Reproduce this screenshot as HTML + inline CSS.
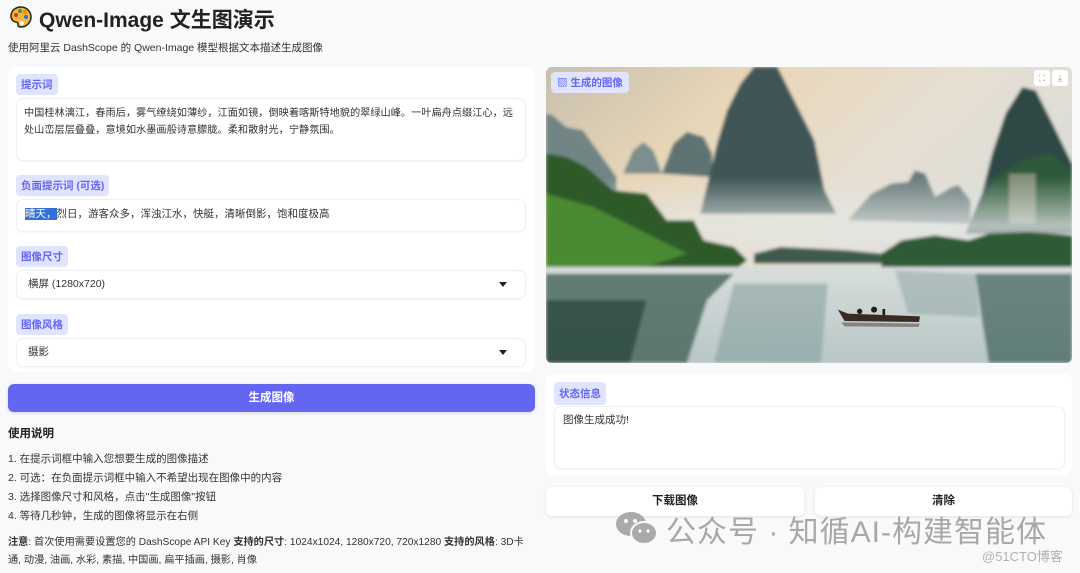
<!DOCTYPE html>
<html><head><meta charset="utf-8"><style>
*{box-sizing:border-box;margin:0;padding:0}
body{width:1080px;height:573px;background:#f8f9fb;font-family:"Liberation Sans","Noto Sans CJK SC",sans-serif;color:#1f2937;position:relative;overflow:hidden}
.abs{position:absolute}
h1{position:absolute;left:39px;top:4px;font-size:21px;font-weight:bold;color:#222}
.sub{left:8px;top:40px;font-size:10.5px;color:#333}
.card{background:#fff;border-radius:8px}
.lab{position:absolute;background:#e0e4ff;color:#6366f1;font-size:10.5px;font-weight:bold;padding:3px 5px;border-radius:4px}
.box{position:absolute;background:#fff;border-radius:6px;box-shadow:0 0 0 1px #eef0f3,0 1px 3px rgba(0,0,0,.08);font-size:10.5px;color:#333;line-height:17px;padding:5px 8px}
.btn{position:absolute;border-radius:6px;font-size:11.5px;font-weight:bold;text-align:center}
.t{position:absolute;font-size:10.5px;color:#333}
</style></head><body>
<svg class="abs" style="left:9px;top:5px" width="24" height="24" viewBox="0 0 24 24"><path d="M12 2C6 2 2 6 2 11c0 4 3 6 5 6 2 0 2 2 2 3 0 2 2 2 3 2 6 0 10-5 10-10S18 2 12 2z" fill="#f4b63a" stroke="#222" stroke-width="1.5"/><circle cx="7" cy="10" r="2" fill="#e03131"/><circle cx="11" cy="6" r="2" fill="#2f9e44"/><circle cx="16" cy="7" r="2" fill="#f08c00"/><circle cx="17" cy="12" r="2" fill="#1c7ed6"/><circle cx="13" cy="18" r="2" fill="#fff"/></svg>
<h1>Qwen-Image 文生图演示</h1>
<div class="abs sub">使用阿里云 DashScope 的 Qwen-Image 模型根据文本描述生成图像</div>

<div class="abs card" style="left:8px;top:67px;width:527px;height:305px"></div>
<div class="lab" style="left:16px;top:74px">提示词</div>
<div class="box" style="left:17px;top:99px;width:508px;height:61px;font-size:10.2px;padding:6px 7px">中国桂林漓江，春雨后，雾气缭绕如薄纱，江面如镜，倒映着喀斯特地貌的翠绿山峰。一叶扁舟点缀江心，远处山峦层层叠叠，意境如水墨画般诗意朦胧。柔和散射光，宁静氛围。</div>
<div class="lab" style="left:16px;top:175px">负面提示词 (可选)</div>
<div class="box" style="left:17px;top:200px;width:508px;height:31px;padding-top:6px"><span style="background:#3370d8;color:#fff">晴天，</span>烈日，游客众多，浑浊江水，快艇，清晰倒影，饱和度极高</div>
<div class="lab" style="left:16px;top:246px">图像尺寸</div>
<div class="box" style="left:17px;top:271px;width:508px;height:27px;padding:5px 11px">横屏 (1280x720)<span style="position:absolute;right:18px;top:11px;border:4px solid transparent;border-top:5px solid #222"></span></div>
<div class="lab" style="left:16px;top:314px">图像风格</div>
<div class="box" style="left:17px;top:339px;width:508px;height:27px;padding:5px 11px">摄影<span style="position:absolute;right:18px;top:11px;border:4px solid transparent;border-top:5px solid #222"></span></div>

<div class="btn" style="left:8px;top:384px;width:527px;height:28px;background:#6366f1;color:#fff;line-height:28px;box-shadow:0 1px 3px rgba(0,0,0,.15)">生成图像</div>
<div class="t" style="left:8px;top:425px;font-weight:bold;font-size:11.5px;color:#222">使用说明</div>
<div class="t" style="left:8px;top:451px">1. 在提示词框中输入您想要生成的图像描述</div>
<div class="t" style="left:8px;top:470px">2. 可选：在负面提示词框中输入不希望出现在图像中的内容</div>
<div class="t" style="left:8px;top:489px">3. 选择图像尺寸和风格，点击"生成图像"按钮</div>
<div class="t" style="left:8px;top:508px">4. 等待几秒钟，生成的图像将显示在右侧</div>
<div class="t" style="left:8px;top:534px;width:527px;line-height:18px;font-size:10.2px"><b>注意</b>: 首次使用需要设置您的 DashScope API Key <b>支持的尺寸</b>: 1024x1024, 1280x720, 720x1280 <b>支持的风格</b>: 3D卡通, 动漫, 油画, 水彩, 素描, 中国画, 扁平插画, 摄影, 肖像</div>

<svg class="abs" style="left:546px;top:67px;border-radius:6px" width="526" height="296" viewBox="0 0 1568 888" preserveAspectRatio="none">
<defs>
<linearGradient id="sky" x1="0" y1="0" x2="1" y2="0.6"><stop offset="0" stop-color="#c8c0ae"/><stop offset=".3" stop-color="#e8d6b8"/><stop offset=".6" stop-color="#e6dfd2"/><stop offset="1" stop-color="#d6dcda"/></linearGradient>
<linearGradient id="wat" x1="0" y1="0" x2="0" y2="1"><stop offset="0" stop-color="#d8dedc"/><stop offset="1" stop-color="#b8c6c6"/></linearGradient>
<linearGradient id="mist" x1="0" y1="0" x2="0" y2="1"><stop offset="0" stop-color="#e4e8e6" stop-opacity="0"/><stop offset=".55" stop-color="#e4e8e6" stop-opacity=".75"/><stop offset="1" stop-color="#e4e8e6" stop-opacity="0"/></linearGradient>
<filter id="bl" x="-5%" y="-5%" width="110%" height="110%"><feGaussianBlur stdDeviation="5" edgeMode="duplicate"/></filter>
</defs>
<rect width="1568" height="888" fill="url(#sky)"/>
<g filter="url(#bl)">
<rect width="1568" height="888" fill="url(#sky)"/>
<path d="M0 140 L20 145 L60 180 L110 190 L160 260 L210 330 L210 400 L0 400Z" fill="#6f8584"/>
<path d="M230 320 L260 250 L290 225 L320 250 L345 320Z" fill="#7d8e8c"/>
<path d="M345 320 L380 230 L420 195 L470 210 L495 260 L495 330Z" fill="#5f7372"/>
<path d="M460 440 L510 230 L540 130 L580 50 L620 0 L690 0 L740 100 L800 220 L830 370 L865 440Z" fill="#3f5656"/>
<path d="M900 460 L970 380 L1030 350 L1080 345 L1100 310 L1130 320 L1160 390 L1210 360 L1230 355 L1265 400 L1265 470Z" fill="#697c7c"/>
<path d="M1250 500 L1300 380 L1330 260 L1370 140 L1420 60 L1460 70 L1510 170 L1568 290 L1568 500Z" fill="#2e4a44"/>
<path d="M1290 440 L1340 330 L1420 280 L1510 260 L1568 320 L1568 480Z" fill="#2f5a3a"/>
<rect x="1380" y="320" width="80" height="150" fill="#b9b1a2" opacity=".6"/>
<rect y="330" width="1568" height="270" fill="url(#mist)"/>
<path d="M0 260 L60 270 L120 300 L200 370 L300 380 L360 460 L440 460 L470 520 L560 540 L600 580 L560 610 L0 620Z" fill="#2d5a2a"/>
<path d="M0 380 L140 420 L300 500 L420 560 L300 600 L0 610Z" fill="#4a8a30"/>
<path d="M620 560 L700 540 L800 545 L900 550 L1000 560 L1000 590 L620 590Z" fill="#3f5a4e"/>
<path d="M1000 560 L1060 520 L1160 505 L1260 520 L1320 500 L1440 495 L1568 505 L1568 600 L1000 600Z" fill="#2f5a36"/>
<rect y="600" width="1568" height="288" fill="url(#wat)"/>
<path d="M0 620 L560 620 L480 700 L420 888 L0 888Z" fill="#3b5c52" opacity=".75"/>
<path d="M0 700 L300 700 L250 888 L0 888Z" fill="#26423a" opacity=".7"/>
<path d="M560 650 L840 650 L820 888 L500 888Z" fill="#7c9898" opacity=".5"/>
<path d="M1280 620 L1568 620 L1568 888 L1320 888 L1300 760Z" fill="#45655f" opacity=".75"/>
<path d="M1040 610 L1280 620 L1290 750 L1080 740Z" fill="#8aa2a0" opacity=".5"/>
</g>
<path d="M870 728 L900 740 L1115 748 L1112 765 L890 762Z" fill="#3a2a24"/>
<circle cx="935" cy="733" r="8" fill="#2a1a16"/><circle cx="978" cy="728" r="9" fill="#2a1a16"/><rect x="1003" y="726" width="8" height="18" fill="#2a1a16"/>
<path d="M880 766 L1115 770 L1110 780 L890 778Z" fill="#5a5048" opacity=".6"/>
</svg>
<div class="lab" style="left:551px;top:72px;padding:3px 6px;font-size:10.5px">▧ 生成的图像</div>
<div class="abs" style="left:1034px;top:70px;width:16px;height:16px;background:#fff;border-radius:3px;font-size:9px;color:#999;text-align:center;line-height:16px">⛶</div>
<div class="abs" style="left:1052px;top:70px;width:16px;height:16px;background:#fff;border-radius:3px;font-size:9px;color:#999;text-align:center;line-height:16px">⤓</div>

<div class="abs card" style="left:546px;top:374px;width:526px;height:101px"></div>
<div class="lab" style="left:554px;top:382px;padding:4px 5px">状态信息</div>
<div class="box" style="left:555px;top:407px;width:509px;height:61px">图像生成成功!</div>
<div class="btn" style="left:546px;top:487px;width:258px;height:29px;background:#fff;line-height:29px;box-shadow:0 1px 3px rgba(0,0,0,.1);color:#222">下载图像</div>
<div class="btn" style="left:815px;top:487px;width:257px;height:29px;background:#fff;line-height:29px;box-shadow:0 1px 3px rgba(0,0,0,.1);color:#222">清除</div>

<svg class="abs" style="left:615px;top:510px" width="44" height="36" viewBox="0 0 44 36"><ellipse cx="16" cy="14" rx="15" ry="12" fill="#aaa"/><ellipse cx="29" cy="23" rx="13" ry="11" fill="#aaa" stroke="#f8f9fb" stroke-width="2"/><circle cx="11" cy="11" r="2" fill="#f8f9fb"/><circle cx="20" cy="11" r="2" fill="#f8f9fb"/><circle cx="25" cy="21" r="1.6" fill="#f8f9fb"/><circle cx="33" cy="21" r="1.6" fill="#f8f9fb"/></svg>
<div class="abs" style="left:666px;top:507px;font-size:30px;color:#a8a8a8;letter-spacing:1px;white-space:nowrap">公众号 · 知循AI-构建智能体</div>
<div class="abs" style="left:982px;top:546px;font-size:13px;color:#b0b0b0">@51CTO博客</div>
</body></html>
